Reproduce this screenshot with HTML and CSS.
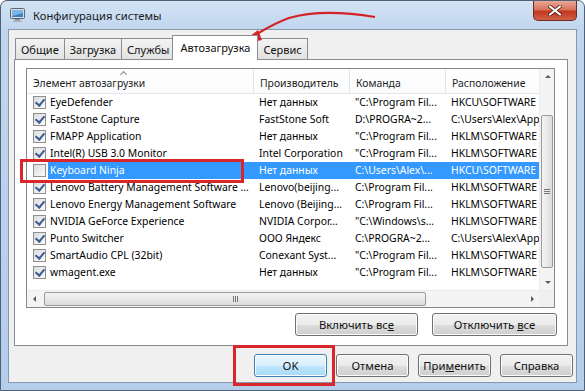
FILE: index.html
```html
<!DOCTYPE html>
<html lang="ru">
<head>
  <meta charset="UTF-8">
  <title>Конфигурация системы</title>
  <link rel="stylesheet" href="styles.css">
</head>
<body>
  <div class="window">
    <div class="titlebar">
      <svg class="app-icon" width="15" height="14" viewBox="0 0 15 14">
        <rect x="0.5" y="0.5" width="14" height="10" rx="1" fill="#d8dde4" stroke="#5d6670"/>
        <rect x="2" y="2" width="11" height="7" fill="#3d7fc4"/>
        <path d="M2 2h11v3L2 8z" fill="#7fb4e6"/>
        <rect x="5" y="11" width="5" height="1.5" fill="#7b838c"/>
        <rect x="3" y="12.5" width="9" height="1.5" fill="#a8afb7"/>
      </svg>
      <span class="title">Конфигурация системы</span>
      <div class="close">
        <svg width="14" height="11" viewBox="0 0 14 11">
          <path d="M2 1.5l10 8M12 1.5l-10 8" stroke="#5a1a10" stroke-width="3.6" stroke-linecap="round"/>
          <path d="M2 1.5l10 8M12 1.5l-10 8" stroke="#fff" stroke-width="2.2" stroke-linecap="round"/>
        </svg>
      </div>
    </div>

    <div class="client">
      <div class="tabs">
        <div class="tab">Общие</div>
        <div class="tab">Загрузка</div>
        <div class="tab">Службы</div>
        <div class="tab active">Автозагрузка</div>
        <div class="tab">Сервис</div>
      </div>

      <div class="panel">
        <div class="list">
          <div class="list-main">
            <div class="grid">
              <div class="row head">
                <div class="cell first">Элемент автозагрузки<span class="sort"></span></div>
                <div class="cell">Производитель</div>
                <div class="cell">Команда</div>
                <div class="cell">Расположение</div>
              </div>
              <div class="row">
                <div class="cell first"><span class="check on"></span><span class="label">EyeDefender</span></div>
                <div class="cell">Нет данных</div>
                <div class="cell">"C:\Program Fil...</div>
                <div class="cell">HKCU\SOFTWARE</div>
              </div>
              <div class="row">
                <div class="cell first"><span class="check on"></span><span class="label">FastStone Capture</span></div>
                <div class="cell">FastStone Soft</div>
                <div class="cell">D:\PROGRA~2...</div>
                <div class="cell">C:\Users\Alex\App</div>
              </div>
              <div class="row">
                <div class="cell first"><span class="check on"></span><span class="label">FMAPP Application</span></div>
                <div class="cell">Нет данных</div>
                <div class="cell">"C:\Program Fil...</div>
                <div class="cell">HKLM\SOFTWARE</div>
              </div>
              <div class="row">
                <div class="cell first"><span class="check on"></span><span class="label">Intel(R) USB 3.0 Monitor</span></div>
                <div class="cell">Intel Corporation</div>
                <div class="cell">"C:\Program Fil...</div>
                <div class="cell">HKLM\SOFTWARE</div>
              </div>
              <div class="row selected">
                <div class="cell first"><span class="check"></span><span class="label">Keyboard Ninja</span></div>
                <div class="cell">Нет данных</div>
                <div class="cell">C:\Users\Alex\...</div>
                <div class="cell">HKCU\SOFTWARE</div>
              </div>
              <div class="row">
                <div class="cell first"><span class="check on"></span><span class="label">Lenovo Battery Management Software ...</span></div>
                <div class="cell">Lenovo(beijing...</div>
                <div class="cell">C:\Program Fil...</div>
                <div class="cell">HKLM\SOFTWARE</div>
              </div>
              <div class="row">
                <div class="cell first"><span class="check on"></span><span class="label">Lenovo Energy Management Software</span></div>
                <div class="cell">Lenovo (Beijing...</div>
                <div class="cell">C:\Program Fil...</div>
                <div class="cell">HKLM\SOFTWARE</div>
              </div>
              <div class="row">
                <div class="cell first"><span class="check on"></span><span class="label">NVIDIA GeForce Experience</span></div>
                <div class="cell">NVIDIA Corpor...</div>
                <div class="cell">"C:\Windows\s...</div>
                <div class="cell">HKLM\SOFTWARE</div>
              </div>
              <div class="row">
                <div class="cell first"><span class="check on"></span><span class="label">Punto Switcher</span></div>
                <div class="cell">ООО Яндекс</div>
                <div class="cell">C:\PROGRA~2...</div>
                <div class="cell">C:\Users\Alex\App</div>
              </div>
              <div class="row">
                <div class="cell first"><span class="check on"></span><span class="label">SmartAudio CPL (32bit)</span></div>
                <div class="cell">Conexant Syst...</div>
                <div class="cell">"C:\Program Fil...</div>
                <div class="cell">HKLM\SOFTWARE</div>
              </div>
              <div class="row">
                <div class="cell first"><span class="check on"></span><span class="label">wmagent.exe</span></div>
                <div class="cell">Нет данных</div>
                <div class="cell">"C:\Program Fil...</div>
                <div class="cell">HKLM\SOFTWARE</div>
              </div>
            </div>
            <div class="vscroll">
              <div class="arrow up"></div>
              <div class="vtrack"><div class="vthumb"><span class="grip-h"></span></div></div>
              <div class="arrow down"></div>
            </div>
          </div>
          <div class="hscroll">
            <div class="arrow left"></div>
            <div class="htrack"><div class="hthumb"><span class="grip-v"></span></div></div>
            <div class="arrow right"></div>
            <div class="corner"></div>
          </div>
        </div>
        <div class="list-actions">
          <button class="btn wide">Включить вс<u>е</u></button>
          <button class="btn wide">Отключить <u>в</u>се</button>
        </div>
      </div>

      <div class="footer">
        <button class="btn default">OK</button>
        <button class="btn">Отмена</button>
        <button class="btn">При<u>м</u>енить</button>
        <button class="btn">Справка</button>
      </div>
    </div>

    <!-- red annotations drawn over the screenshot -->
    <div class="mark mark-row"></div>
    <div class="mark mark-ok"></div>
    <svg class="pointer" width="160" height="50" viewBox="0 0 160 50">
      <path d="M150 12 C120 7, 88 6, 64 13 C52 17, 42 23, 30 30" fill="none" stroke="#d42327" stroke-width="2.2"/>
      <path d="M14 40 L33 25 L37 35 Z" fill="#d42327"/>
    </svg>
  </div>
</body>
</html>
```

FILE: styles.css
```css
* { box-sizing: border-box; }
body {
  margin: 0;
  width: 585px;
  height: 391px;
  overflow: hidden;
  font-family: "Noto Sans", "Liberation Sans", sans-serif;
  font-size: 10.4px;
  color: #000;
  background: #fff;
}
.window {
  position: relative;
  width: 585px;
  height: 391px;
  display: flex;
  flex-direction: column;
  padding: 0 7px 7px;
  background: linear-gradient(180deg, #d3e3f4 0, #c0d6ee 28px, #b4cde9 100%);
  border: 1px solid #4f6079;
  border-radius: 7px 7px 0 0;
}
.titlebar {
  height: 28px;
  display: flex;
  align-items: center;
  gap: 8px;
  padding-left: 2px;
}
.title {
  font-size: 11.2px;
  color: #1a1a1a;
}
.close {
  margin-left: auto;
  align-self: flex-start;
  width: 44px;
  height: 20px;
  display: flex;
  align-items: center;
  justify-content: center;
  background: linear-gradient(180deg, #e9a897 0, #d7735b 45%, #c2391f 55%, #d0604a 100%);
  border: 1px solid #6e2c20;
  border-top: none;
  border-radius: 0 0 5px 5px;
}

/* client area */
.client {
  flex: 1;
  display: flex;
  flex-direction: column;
  background: #f0f0f0;
  border: 1px solid #8598b0;
  padding: 6px 8px 0 5px;
}
.tabs {
  display: flex;
  align-items: flex-end;
  height: 23px;
  padding-left: 1px;
}
.tab {
  height: 21px;
  padding: 3px 5px 0;
  margin-right: -1px;
  border: 1px solid #898c95;
  border-bottom: none;
  background: linear-gradient(180deg, #f3f3f3, #e2e2e2);
  font-size: 11px;
  color: #111;
}
.tab.active {
  position: relative;
  z-index: 1;
  height: 25px;
  padding: 4px 7px 0;
  margin: 0 -1px -1px -2px;
  background: #fff;
}
.panel {
  height: 287px;
  background: #fff;
  border: 1px solid #898c95;
  padding: 8px 12px 0 11px;
}

/* list view */
.list {
  height: 240px;
  border: 1px solid #828790;
  display: flex;
  flex-direction: column;
}
.list-main {
  flex: 1;
  display: flex;
  min-height: 0;
}
.grid {
  flex: 1;
  overflow: hidden;
}
.row {
  display: grid;
  grid-template-columns: 227px 96px 96px 93px;
  height: 17px;
  white-space: nowrap;
}
.cell {
  overflow: hidden;
  padding-left: 5px;
  line-height: 17px;
  display: flex;
  align-items: center;
}
.row.head {
  height: 25px;
  background: linear-gradient(180deg, #fff, #fafbfc);
  border-bottom: 1px solid #e3e5e8;
}
.row.head .cell {
  position: relative;
  padding-left: 6px;
  padding-top: 4px;
  line-height: 20px;
  border-right: 1px solid #e3e5e8;
  color: #1e1e1e;
}
.row.head .cell:last-child { border-right: none; }
.sort {
  position: absolute;
  left: 94px;
  top: 3px;
  width: 5px;
  height: 5px;
  border-left: 1px solid #8a8a8a;
  border-top: 1px solid #8a8a8a;
  transform: rotate(45deg);
}
.cell.first { padding-left: 6px; }
.check {
  flex: none;
  width: 13px;
  height: 13px;
  border: 1px solid #8f8f8f;
  background: linear-gradient(135deg, #dcdcdc, #fbfbfb);
  position: relative;
}
.check.on::after {
  content: "";
  position: absolute;
  left: 3px;
  top: 0px;
  width: 4px;
  height: 7px;
  border: solid #3b5d94;
  border-width: 0 2px 2px 0;
  transform: rotate(40deg);
}
.label {
  flex: 1;
  margin-left: 2px;
  padding-left: 2px;
}
.row.selected .label,
.row.selected .cell:not(.first) {
  background: #3399ff;
  color: #fff;
}

/* scrollbars */
.vscroll {
  width: 15px;
  flex: none;
  display: flex;
  flex-direction: column;
  background: #f4f4f4;
  border-left: 1px solid #ebebeb;
}
.vtrack {
  flex: 1;
  padding: 30px 1px 6px;
}
.vthumb {
  height: 100%;
  border: 1px solid #9a9a9a;
  border-radius: 2px;
  background: linear-gradient(90deg, #f4f4f4, #dcdcdc);
  display: flex;
  align-items: center;
  justify-content: center;
}
.grip-h {
  width: 6px;
  height: 5px;
  border-top: 1px solid #777;
  border-bottom: 1px solid #777;
  position: relative;
}
.grip-h::after {
  content: "";
  position: absolute;
  left: 0;
  right: 0;
  top: 1px;
  border-top: 1px solid #777;
}
.arrow {
  width: 15px;
  height: 16px;
  flex: none;
  position: relative;
}
.arrow::after {
  content: "";
  position: absolute;
  left: 50%;
  top: 50%;
  border: 3px solid transparent;
}
.arrow.up::after { border-bottom: 3px solid #5c5c5c; margin: -5px 0 0 -3px; }
.arrow.down::after { border-top: 3px solid #5c5c5c; margin: -1px 0 0 -3px; }
.arrow.left::after { border-right: 3px solid #5c5c5c; margin: -3px 0 0 -5px; }
.arrow.right::after { border-left: 3px solid #5c5c5c; margin: -3px 0 0 -1px; }
.hscroll {
  height: 17px;
  flex: none;
  display: flex;
  background: #f4f4f4;
  border-top: 1px solid #ebebeb;
}
.htrack {
  flex: 1;
  padding: 1px 98px 1px 2px;
}
.hthumb {
  height: 100%;
  border: 1px solid #9a9a9a;
  border-radius: 2px;
  background: linear-gradient(180deg, #f4f4f4, #dcdcdc);
  display: flex;
  align-items: center;
  justify-content: center;
}
.grip-v {
  width: 5px;
  height: 6px;
  border-left: 1px solid #777;
  border-right: 1px solid #777;
  position: relative;
}
.grip-v::after {
  content: "";
  position: absolute;
  top: 0;
  bottom: 0;
  left: 1px;
  border-left: 1px solid #777;
}
.corner {
  width: 15px;
  background: #f0f0f0;
}

/* buttons */
.btn {
  height: 23px;
  width: 73px;
  padding: 0;
  font-family: inherit;
  font-size: 11.3px;
  color: #111;
  border: 1px solid #707070;
  border-radius: 3px;
  background: linear-gradient(180deg, #f2f2f2 0, #ebebeb 50%, #dddddd 51%, #cfcfcf 100%);
  box-shadow: inset 0 0 0 1px #fbfbfb;
}
.btn u { text-decoration: underline; }
.btn.default {
  border-color: #3c7fb1;
  background: linear-gradient(180deg, #eaf6fd 0, #d9f0fc 50%, #bee6fd 51%, #a7d9f5 100%);
}
.list-actions {
  display: flex;
  justify-content: flex-end;
  gap: 14px;
  margin-top: 5px;
  margin-right: -2px;
}
.btn.wide { width: 123px; }
.btn.wide + .btn.wide { width: 125px; }
.footer {
  display: flex;
  justify-content: flex-end;
  gap: 9px;
  padding-top: 8px;
  margin-right: -5px;
}

/* annotations */
.mark {
  position: absolute;
  border: 3px solid #d9262b;
}
.mark-row { left: 19px; top: 158px; width: 224px; height: 24px; }
.mark-ok { left: 232px; top: 344px; width: 102px; height: 41px; }
.pointer {
  position: absolute;
  left: 224px;
  top: 4px;
}
```
